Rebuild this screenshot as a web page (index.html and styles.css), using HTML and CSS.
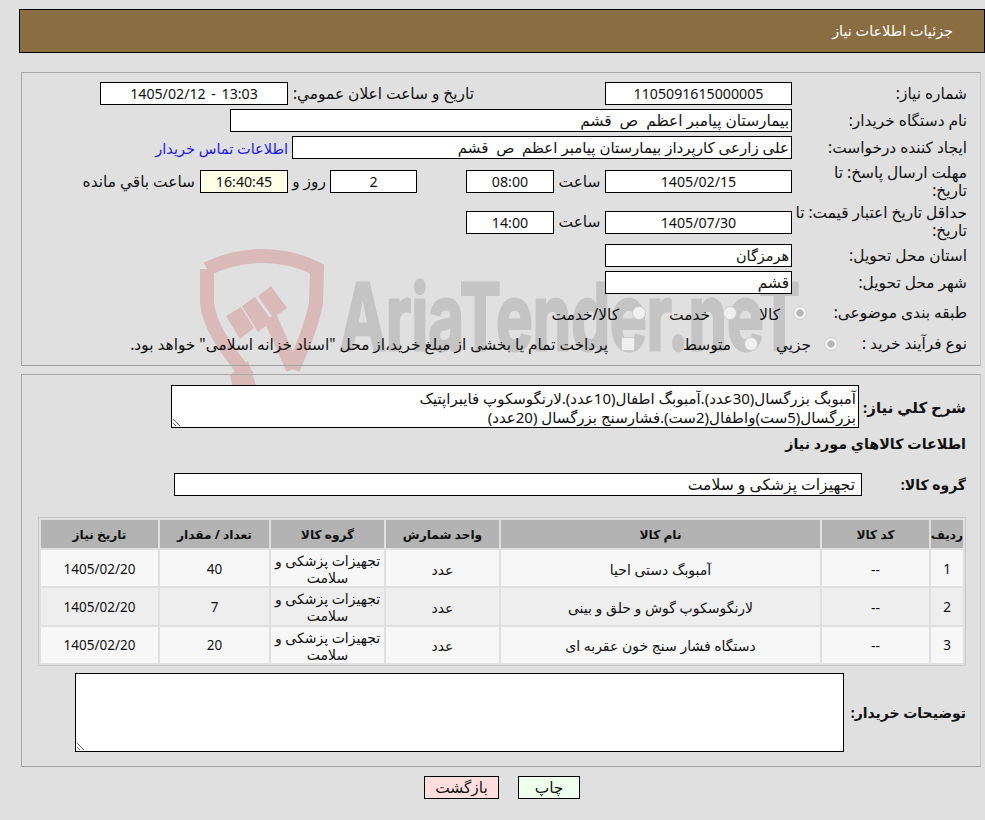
FILE: index.html
```html
<!DOCTYPE html>
<html lang="fa" dir="rtl">
<head>
<meta charset="utf-8">
<title>جزئیات اطلاعات نیاز</title>
<link rel="stylesheet" href="styles.css">
</head>
<body>
<svg class="watermark" viewBox="0 0 650 150" width="650" height="150" aria-hidden="true">
  <g class="wm-shield">
    <path class="wm-line" d="M17,24 C35,15 52,11 72,11 C92,11 110,15 127,24 L126,58 C122,80 112,103 103,124"/>
    <path class="wm-line" d="M17,24 L17,58 C20,85 40,108 58,132"/>
    <path class="wm-line" d="M80,72 L103,124"/>
    <polygon points="40,130 58,116 66,140 42,140"/>
    <polygon points="36,71 51,62 64,83 50,94"/>
    <polygon points="52,61 65,52 82,76 68,87"/>
    <polygon points="68,51 81,41 97,63 83,73"/>
  </g>
  <text class="wm-text" x="150" y="105" textLength="460" lengthAdjust="spacingAndGlyphs">AriaTender.neT</text>
</svg>

<header class="page-title">جزئیات اطلاعات نیاز</header>

<section class="panel panel-top">
  <div class="row">
    <div class="label">شماره نياز:</div>
    <div class="field w187 center">1105091615000005</div>
    <div class="label label-announce">تاريخ و ساعت اعلان عمومي:</div>
    <div class="field w188 center wide-words" dir="ltr">1405/02/12 - 13:03</div>
  </div>
  <div class="row">
    <div class="label">نام دستگاه خريدار:</div>
    <div class="field w562">بیمارستان پیامبر اعظم&nbsp; ص&nbsp; قشم</div>
  </div>
  <div class="row">
    <div class="label">ايجاد کننده درخواست:</div>
    <div class="field w500 text-15">علی زارعی کارپرداز بیمارستان پیامبر اعظم&nbsp; ص&nbsp; قشم</div>
    <a class="contact" href="#">اطلاعات تماس خريدار</a>
  </div>
  <div class="row row-tall">
    <div class="label">مهلت ارسال پاسخ: تا<br>تاریخ:</div>
    <div class="field w187 center">1405/02/15</div>
    <div class="inline-label w51">ساعت</div>
    <div class="field w88 center">08:00</div>
    <div class="field w87 center after-gap">2</div>
    <div class="inline-label w42">روز و</div>
    <div class="field w88 center timer">16:40:45</div>
    <div class="remaining">ساعت باقي مانده</div>
  </div>
  <div class="row row-tall2">
    <div class="label">حداقل تاريخ اعتبار قيمت: تا<br>تاریخ:</div>
    <div class="field w187 center">1405/07/30</div>
    <div class="inline-label w51">ساعت</div>
    <div class="field w88 center">14:00</div>
  </div>
  <div class="row">
    <div class="label">استان محل تحويل:</div>
    <div class="field w187 text-14">هرمزگان</div>
  </div>
  <div class="row">
    <div class="label">شهر محل تحويل:</div>
    <div class="field w187">قشم</div>
  </div>
  <div class="row row-radio1">
    <div class="label lw160">طبقه بندی موضوعی:</div>
    <div class="option w70"><span class="radio on"></span><span>کالا</span></div>
    <div class="option w91"><span class="radio"></span><span>خدمت</span></div>
    <div class="option"><span class="radio"></span><span>کالا/خدمت</span></div>
  </div>
  <div class="row row-radio2">
    <div class="label lw129">نوع فرآيند خريد :</div>
    <div class="option w80"><span class="radio on"></span><span>جزیي</span></div>
    <div class="option w123"><span class="radio"></span><span>متوسط</span></div>
    <div class="option"><span class="check"></span><span>پرداخت تمام يا بخشی از مبلغ خريد،از محل "اسناد خزانه اسلامی" خواهد بود.</span></div>
  </div>
</section>

<section class="panel panel-bottom">
  <div class="row-top">
    <div class="label-bold label-desc">شرح كلي نياز:</div>
    <textarea class="area area-desc" readonly>آمبوبگ بزرگسال(30عدد).آمبوبگ اطفال(10عدد).لارنگوسکوپ فایبراپتیک
بزرگسال(5ست)واطفال(2ست).فشارسنج بزرگسال (20عدد)</textarea>
  </div>
  <h2 class="goods-title">اطلاعات كالاهاي مورد نياز</h2>
  <div class="row row-group">
    <div class="label-bold lw104">گروه کالا:</div>
    <div class="field w688 group-value">تجهیزات پزشکی و سلامت</div>
  </div>
  <div class="table-wrap">
    <table class="goods">
      <colgroup>
        <col class="c-idx"><col class="c-code"><col class="c-name"><col class="c-unit"><col class="c-group"><col class="c-qty"><col class="c-date">
      </colgroup>
      <thead>
        <tr><th>رديف</th><th>کد کالا</th><th>نام کالا</th><th>واحد شمارش</th><th>گروه کالا</th><th>تعداد / مقدار</th><th>تاریخ نیاز</th></tr>
      </thead>
      <tbody>
        <tr><td>1</td><td>--</td><td>آمبوبگ دستی احیا</td><td>عدد</td><td>تجهیزات پزشکی و سلامت</td><td>40</td><td>1405/02/20</td></tr>
        <tr><td>2</td><td>--</td><td>لارنگوسکوپ گوش و حلق و بینی</td><td>عدد</td><td>تجهیزات پزشکی و سلامت</td><td>7</td><td>1405/02/20</td></tr>
        <tr><td>3</td><td>--</td><td>دستگاه فشار سنج خون عقربه ای</td><td>عدد</td><td>تجهیزات پزشکی و سلامت</td><td>20</td><td>1405/02/20</td></tr>
      </tbody>
    </table>
  </div>
  <div class="row row-notes">
    <div class="label-bold lw122">توضیحات خریدار:</div>
    <textarea class="area area-notes" readonly></textarea>
  </div>
</section>

<div class="actions">
  <button class="btn btn-print" type="button">چاپ</button>
  <button class="btn btn-back" type="button">بازگشت</button>
</div>
</body>
</html>
```
FILE: styles.css
```css
* { box-sizing: border-box; }
html, body { margin: 0; padding: 0; }
body {
  position: relative;
  z-index: 0;
  height: 820px;
  overflow: hidden;
  background: #e0e0e0;
  color: #111;
  font-family: "Noto Sans", "DejaVu Sans", sans-serif;
  font-size: 15.4px;
  line-height: 18px;
  padding-top: 9px;
}
.watermark { position: absolute; left: 190px; top: 245px; z-index: -1; }
.wm-shield { fill: #dab9b9; }
.wm-line { fill: none; stroke: #dab9b9; stroke-width: 14; }
.wm-text {
  fill: #c4c4c4;
  stroke: #c4c4c4;
  stroke-width: 3;
  font-family: "Inter", "Liberation Sans", sans-serif;
  font-weight: 700;
  font-size: 92px;
  direction: ltr;
}

.page-title {
  height: 44px;
  margin-left: 19px;
  padding-right: 31px;
  background: #8b6d42;
  border: 1px solid #000;
  color: #fff;
  font-size: 14.4px;
  line-height: 42px;
}
.panel {
  margin-left: 21px;
  margin-right: 4px;
  border: 1px solid #c4c4c4;
  border-top-color: #a8a8a8;
  border-bottom-color: #a0a0a0;
  border-left-color: #a8a8a8;
}
.panel-top { height: 294px; margin-top: 19px; padding: 9px 13px 0 0; }
.panel-bottom { height: 393px; margin-top: 8px; padding: 10px 14px 0 0; }

.row { display: flex; align-items: center; min-height: 23px; margin-bottom: 4px; }
.row-tall { height: 37px; }
.row-tall2 { height: 36px; }
.row-radio1 { height: 30px; }
.row-radio2 { height: 22px; }
.row-top { display: flex; align-items: center; }

.label { width: 175px; flex: none; }
.lw160 { width: 160px; }
.lw129 { width: 129px; }
.label-bold { flex: none; font-weight: 700; font-size: 14px; }
.label-desc { width: 107px; font-size: 15px; }
.lw104 { width: 104px; }
.lw122 { width: 122px; }
.label-announce { width: 317px; padding-right: 131px; }

.field {
  flex: none;
  height: 23px;
  padding: 0 2px;
  background: #fff;
  border: 1px solid #000;
  line-height: 21px;
  white-space: nowrap;
  overflow: hidden;
}
.center { text-align: center; font-size: 14.2px; }
.wide-words { word-spacing: 2px; }
.text-15 { font-size: 15px; }
.text-14 { font-size: 14.4px; }
.group-value { padding-right: 6px; font-size: 15.6px; }
.w187 { width: 187px; }
.w188 { width: 188px; }
.w562 { width: 562px; }
.w500 { width: 500px; }
.w88 { width: 88px; }
.w87 { width: 87px; }
.w688 { width: 688px; }
.after-gap { margin-right: 49px; }
.timer { background: #ffffe8; }
.inline-label { flex: none; text-align: center; }
.w51 { width: 51px; }
.w42 { width: 42px; }
.remaining { margin-right: 5px; white-space: nowrap; }
.contact { margin-right: 4px; color: #1a1aee; font-size: 14.5px; text-decoration: none; white-space: nowrap; }

.option { display: flex; flex: none; align-items: center; gap: 13px; white-space: nowrap; }
.w70 { width: 70px; }
.w91 { width: 91px; }
.w80 { width: 80px; }
.w123 { width: 123px; }
.option > span:last-child { padding-top: 3px; }
.radio {
  flex: none;
  width: 14px;
  height: 14px;
  border: 1px solid #cdcdcd;
  border-radius: 50%;
  background: #f0f0f0;
}
.radio.on { background: radial-gradient(circle, #b4b4b4 0 3px, #f2f2f2 4px); }
.check {
  flex: none;
  width: 14px;
  height: 14px;
  border: 1px solid #cdcdcd;
  border-radius: 2px;
  background: #f0f0f0;
}

.area {
  display: block;
  flex: none;
  padding: 3px 2px 0;
  background: #fff;
  border: 1px solid #000;
  border-radius: 0;
  color: #111;
  font: inherit;
  font-size: 15px;
  line-height: 19px;
  outline: none;
  white-space: pre;
}
.area-desc { width: 688px; height: 43px; }
.area-notes { width: 769px; height: 79px; }
.goods-title { height: 20px; margin: 6px 0 0; font-size: 14.3px; font-weight: 700; line-height: 20px; }
.row-group { margin: 19px 0 0; }

.table-wrap { width: 928px; margin-top: 21px; }
.goods {
  width: 928px;
  height: 149px;
  table-layout: fixed;
  border: 1px solid #c8c8c8;
  border-collapse: separate;
  border-spacing: 2px;
  font-size: 14px;
  line-height: 17px;
  text-align: center;
}
.c-idx { width: 32px; }
.c-code { width: 107px; }
.c-name { width: 319px; }
.c-unit { width: 113px; }
.c-group { width: 113px; }
.c-qty { width: 109px; }
.c-date { width: 117px; }
.goods th { height: 28px; padding: 0; background: #b3b3b3; font-weight: 700; font-size: 12.2px; }
.goods td { padding: 2px 2px 0; background: #f7f7f7; }
.goods tbody tr:nth-child(2) td { background: #eee; }
.goods td:nth-child(1), .goods td:nth-child(6), .goods td:nth-child(7) { font-size: 13.5px; }

.row-notes { margin: 7px 0 0; }

.actions { display: flex; justify-content: center; gap: 19px; margin-top: 9px; padding-left: 19px; }
.btn {
  height: 23px;
  padding: 0;
  border: 1px solid #000;
  border-radius: 0;
  color: #111;
  font: inherit;
  line-height: 19px;
}
.btn-print { width: 62px; background: #eeffee; }
.btn-back { width: 75px; background: #ffdede; }
```
